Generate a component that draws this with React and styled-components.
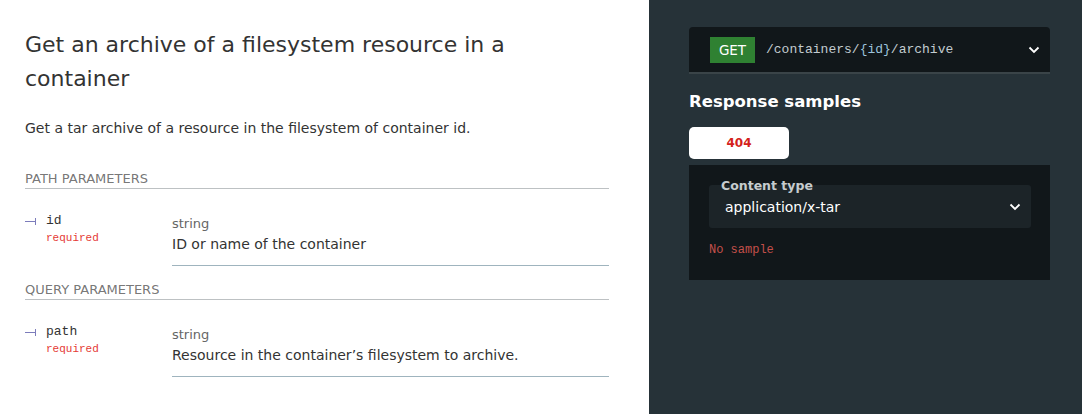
import React from "react"
import styled, { createGlobalStyle } from "styled-components"

const GlobalStyle = createGlobalStyle`
  body {
    margin: 0;
    font-family: "DejaVu Sans", Verdana, sans-serif;
    background: #fff;
  }
`

const Page = styled.div`
  display: grid;
  grid-template-columns: 649px 1fr;
  min-height: 414px;
`

const Main = styled.div`
  padding: 28px 40px 20px 25px;
  color: #333;
`

const Title = styled.h2`
  margin: 0 0 22px;
  font-size: 22px;
  font-weight: normal;
  line-height: 34px;
  color: #333;
`

const Lead = styled.p`
  margin: 0 0 29px;
  font-size: 14px;
  line-height: 21px;
`

const SectionTitle = styled.h5`
  margin: ${(p) => (p.first ? "0" : "13px")} 0 15px;
  padding-top: 1px;
  font-size: 13px;
  line-height: 19px;
  font-weight: normal;
  color: rgba(102, 102, 102, 0.9);
  text-transform: uppercase;
  border-bottom: 1px solid rgba(38, 50, 56, 0.3);
`

const ParamRow = styled.div`
  display: grid;
  grid-template-columns: 147px 1fr;
`

const NameCell = styled.div`
  position: relative;
  padding: 9px 0 0 21px;
  font-family: "Liberation Mono", "Courier New", monospace;
`

const TreeMark = styled.span`
  position: absolute;
  left: 0;
  top: 14px;
  width: 11px;
  height: 7px;
  &::before {
    content: "";
    position: absolute;
    left: 0;
    top: 3px;
    width: 11px;
    border-top: 1px solid #7c7cbb;
  }
  &::after {
    content: "";
    position: absolute;
    right: 0;
    top: 0;
    height: 7px;
    border-left: 1px solid #7c7cbb;
  }
`

const ParamName = styled.div`
  font-size: 13px;
  line-height: 16px;
  color: #333;
`

const Required = styled.div`
  font-size: 11px;
  line-height: 14px;
  color: #e53935;
  margin-top: 2px;
`

const DetailsCell = styled.div`
  padding: 10px 0 10px;
  border-bottom: 1px solid #9fb4be;
`

const TypeLabel = styled.div`
  font-size: 13px;
  line-height: 20px;
  color: #666;
`

const ParamDesc = styled.div`
  font-size: 14px;
  line-height: 21px;
  color: #333;
`

const Side = styled.div`
  background: #263238;
  padding: 27px 32px 20px 40px;
  color: #fff;
`

const Endpoint = styled.div`
  display: flex;
  align-items: center;
  height: 45px;
  padding: 0 10px 0 21px;
  background: #11171a;
  border-radius: 4px 4px 0 0;
  border-bottom: 2px solid #3a4448;
`

const MethodBadge = styled.span`
  display: inline-flex;
  align-items: center;
  justify-content: center;
  width: 45px;
  height: 26px;
  margin-right: 11px;
  background: #2f8132;
  color: #fff;
  font-size: 13.5px;
`

const PathText = styled.span`
  flex: 1;
  font-family: "Liberation Mono", "Courier New", monospace;
  font-size: 13px;
  color: #c3ccd0;
`

const PathParam = styled.span`
  color: #9cc3dc;
`

const SideTitle = styled.h3`
  margin: 17px 0 14px;
  font-size: 16.5px;
  line-height: 22px;
  font-weight: bold;
  color: #fff;
`

const Tab = styled.div`
  display: flex;
  align-items: center;
  justify-content: center;
  width: 100px;
  height: 32px;
  box-sizing: border-box;
  background: #fff;
  border-radius: 5px;
  color: #d41f1c;
  font-size: 12px;
  font-weight: bold;
`

const SamplePanel = styled.div`
  margin-top: 6px;
  padding: 20px 19px 23px 20px;
  background: #11171a;
`

const Select = styled.div`
  position: relative;
  display: flex;
  align-items: center;
  height: 43px;
  padding: 0 10px 0 16px;
  background: #1c2428;
  border-radius: 3px;
`

const SelectLabel = styled.span`
  position: absolute;
  left: 12px;
  top: -7px;
  font-size: 12.5px;
  font-weight: bold;
  color: #c6ccce;
`

const SelectValue = styled.span`
  flex: 1;
  margin-top: 1px;
  font-size: 14px;
  color: #fff;
`

const NoSample = styled.div`
  margin-top: 15px;
  font-family: "Liberation Mono", "Courier New", monospace;
  font-size: 12px;
  color: #c4504a;
`

const Chevron = () => (
  <svg width="12" height="8" viewBox="0 0 12 8">
    <path d="M1.5 1.5 L6 6 L10.5 1.5" fill="none" stroke="#fff" strokeWidth="1.8" />
  </svg>
)

const Param = ({ name, description }) => (
  <ParamRow>
    <NameCell>
      <TreeMark />
      <ParamName>{name}</ParamName>
      <Required>required</Required>
    </NameCell>
    <DetailsCell>
      <TypeLabel>string</TypeLabel>
      <ParamDesc>{description}</ParamDesc>
    </DetailsCell>
  </ParamRow>
)

const App = () => (
  <>
    <GlobalStyle />
    <Page>
      <Main>
        <Title>Get an archive of a filesystem resource in a container</Title>
        <Lead>Get a tar archive of a resource in the filesystem of container id.</Lead>
        <SectionTitle first>Path Parameters</SectionTitle>
        <Param name="id" description="ID or name of the container" />
        <SectionTitle>Query Parameters</SectionTitle>
        <Param name="path" description="Resource in the container’s filesystem to archive." />
      </Main>
      <Side>
        <Endpoint>
          <MethodBadge>GET</MethodBadge>
          <PathText>
            /containers/<PathParam>{"{id}"}</PathParam>/archive
          </PathText>
          <Chevron />
        </Endpoint>
        <SideTitle>Response samples</SideTitle>
        <Tab>404</Tab>
        <SamplePanel>
          <Select>
            <SelectLabel>Content type</SelectLabel>
            <SelectValue>application/x-tar</SelectValue>
            <Chevron />
          </Select>
          <NoSample>No sample</NoSample>
        </SamplePanel>
      </Side>
    </Page>
  </>
)

export default App
